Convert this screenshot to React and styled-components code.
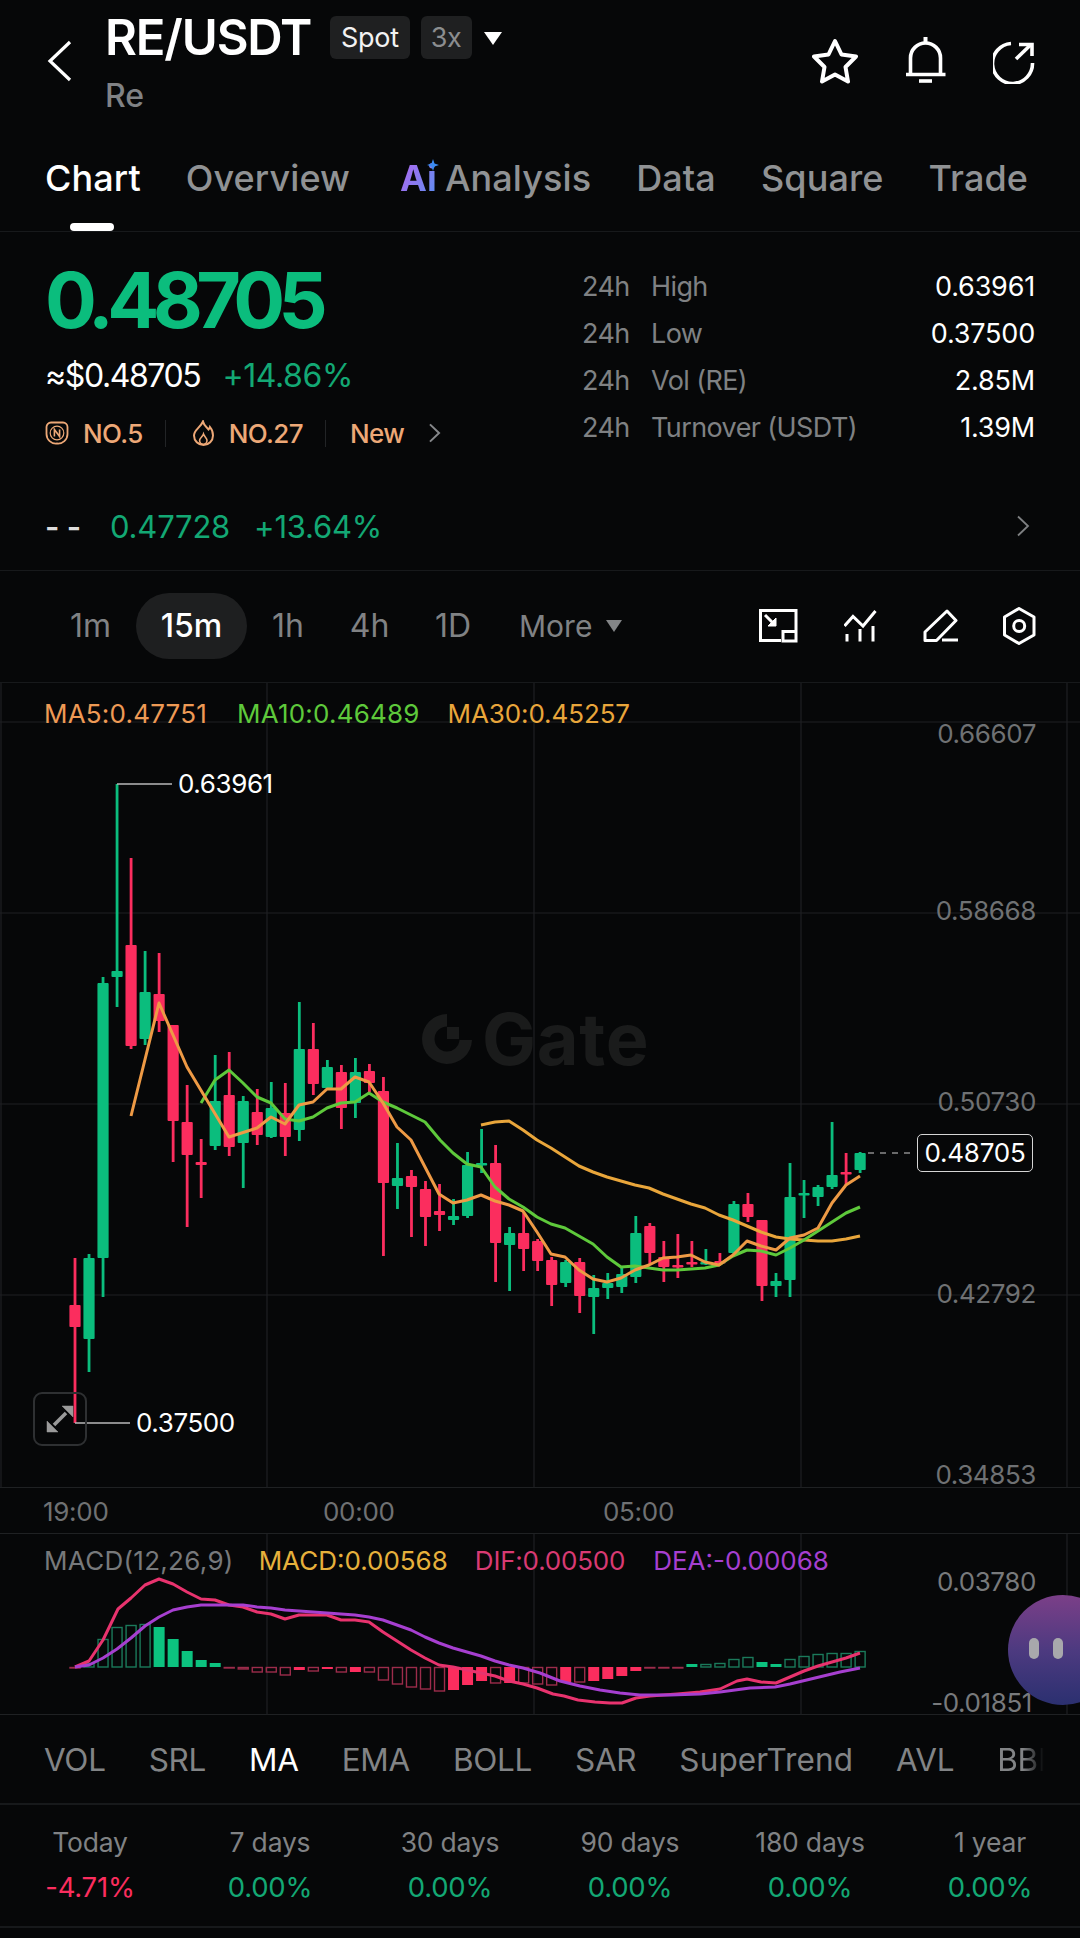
import React from 'react';
import styled, { createGlobalStyle } from 'styled-components';

const GREEN = '#0bbd7d';
const TEXTGREEN = '#13a874';
const RED = '#fb2d5e';
const LINE = '#17191b';
const GRID = '#1f2123';

const Global = createGlobalStyle`
  html, body { margin: 0; padding: 0; background: #060708; }
  body { font-family: Inter, "Liberation Sans", sans-serif; }
  * { box-sizing: border-box; }
`;

const Page = styled.div`
  position: relative;
  width: 1080px;
  height: 1938px;
  overflow: hidden;
  background: #060708;
  color: #fff;
`;

/* ---------- header ---------- */
const Header = styled.header`
  height: 130px;
  display: flex;
  align-items: flex-start;
`;
const BackButton = styled.div`
  width: 105px;
  padding: 40px 0 0 47px;
  svg { display: block; }
`;
const TitleBlock = styled.div`
  display: flex;
  flex-direction: column;
`;
const TitleRow = styled.div`
  display: flex;
  align-items: center;
  height: 76px;
`;
const Title = styled.h1`
  margin: 0;
  font-size: 49px;
  font-weight: 600;
  letter-spacing: -1.15px;
  line-height: 76px;
  width: 225px;
`;
const Badge = styled.span`
  height: 43px;
  margin-top: -1px;
  padding: 0 ${p => p.$pad}px;
  margin-right: 11px;
  border-radius: 6px;
  background: #1f2021;
  color: ${p => p.$muted ? '#8b8d8f' : '#f2f2f2'};
  font-size: 27px;
  font-weight: 400;
  line-height: 43px;
  letter-spacing: -0.3px;
`;
const Caret = styled.span`
  width: 0;
  height: 0;
  margin: 0 0 0 1px;
  border-left: 9px solid transparent;
  border-right: 9px solid transparent;
  border-top: 13px solid #fff;
`;
const Subtitle = styled.div`
  font-size: 32px;
  line-height: 36px;
  margin-top: 2px;
  color: #808285;
  font-weight: 500;
`;
const HeaderIcons = styled.div`
  margin-left: auto;
  display: flex;
  gap: 47.5px;
  padding: 37px 45px 0 0;
  svg { display: block; }
`;

/* ---------- tabs ---------- */
const Tabs = styled.nav`
  height: 102px;
  padding: 24px 0 0 45px;
  display: flex;
  gap: 45px;
  border-bottom: 1px solid ${LINE};
`;
const Tab = styled.div`
  position: relative;
  height: 77px;
  font-size: 36px;
  line-height: 48px;
  font-weight: 500;
  letter-spacing: 0.1px;
  color: ${p => p.$active ? '#fff' : '#909294'};
  margin-left: ${p => p.$offset || 0}px;
  display: flex;
  gap: 8px;
  &::after {
    content: '';
    display: ${p => p.$active ? 'block' : 'none'};
    position: absolute;
    left: 25px;
    bottom: 0;
    width: 44px;
    height: 8px;
    border-radius: 4px;
    background: #fff;
  }
`;
const AiMark = styled.span`
  position: relative;
  font-weight: 700;
  background: linear-gradient(120deg, #a66cf0 15%, #6f86f0 60%, #3a8df0 90%);
  -webkit-background-clip: text;
  background-clip: text;
  color: transparent;
  svg { position: absolute; right: -2px; top: 5px; }
`;

/* ---------- info ---------- */
const Info = styled.section`
  height: 339px;
  border-bottom: 1px solid ${LINE};
  padding: 0 45px;
`;
const InfoTop = styled.div`
  height: 219px;
  display: flex;
  justify-content: space-between;
`;
const PriceColumn = styled.div`
  padding-top: 30px;
`;
const Price = styled.div`
  font-size: 77px;
  line-height: 76px;
  font-weight: 700;
  letter-spacing: -6.6px;
  color: ${GREEN};
`;
const SubPrice = styled.div`
  margin-top: 17px;
  height: 40px;
  display: flex;
  gap: 22px;
  align-items: center;
  font-size: 32px;
  font-weight: 400;
  letter-spacing: -1.4px;
`;
const Change = styled.span`
  color: ${p => p.$red ? RED : TEXTGREEN};
  letter-spacing: -0.4px;
`;
const RankRow = styled.div`
  margin-top: 20px;
  height: 36px;
  display: flex;
  align-items: center;
  font-size: 26px;
  font-weight: 500;
  color: #eda877;
  letter-spacing: -0.6px;
  svg { display: block; }
`;
const Rank = styled.span`
  display: flex;
  align-items: center;
  gap: ${p => p.$gap}px;
`;
const RankDivider = styled.span`
  width: 1px;
  height: 27px;
  background: #222426;
  margin: 0 ${p => p.$r}px 0 ${p => p.$l}px;
`;
const StatsColumn = styled.div`
  width: 453px;
  padding-top: 31px;
`;
const StatRow = styled.div`
  height: 47px;
  display: flex;
  align-items: center;
  font-size: 27px;
  font-weight: 400;
  letter-spacing: -0.6px;
  color: #7f8183;
`;
const StatPeriod = styled.span`
  width: 69px;
`;
const StatValue = styled.span`
  margin-left: auto;
  color: #fff;
  font-size: 27px;
  letter-spacing: -0.2px;
`;
const Ticker = styled.div`
  margin-top: 55px;
  height: 40px;
  display: flex;
  align-items: center;
  font-size: 31px;
  letter-spacing: -0.2px;
  svg { margin-left: auto; margin-right: 5px; display: block; }
`;
const Dashes = styled.span`
  width: 65px;
  color: #ddd;
  font-weight: 600;
`;
const TickerValue = styled.span`
  color: ${TEXTGREEN};
  margin-right: 24px;
`;

/* ---------- timeframe toolbar ---------- */
const Toolbar = styled.div`
  height: 112px;
  padding: 0 0 2px 45px;
  display: flex;
  align-items: center;
  border-bottom: 1px solid ${LINE};
`;
const Interval = styled.span`
  width: ${p => p.$w}px;
  height: 66px;
  border-radius: 33px;
  text-align: center;
  line-height: 66px;
  font-size: 32px;
  font-weight: ${p => p.$active ? 500 : 400};
  color: ${p => p.$active ? '#fff' : '#808284'};
  background: ${p => p.$active ? '#1e1f20' : 'transparent'};
`;
const MoreButton = styled.span`
  margin-left: 23px;
  font-size: 30px;
  color: #808284;
  display: flex;
  align-items: center;
  gap: 14px;
  &::after {
    content: '';
    width: 0;
    height: 0;
    border-left: 8.5px solid transparent;
    border-right: 8.5px solid transparent;
    border-top: 12px solid #838587;
  }
`;
const ToolIcons = styled.div`
  margin-left: auto;
  padding-right: 44px;
  display: flex;
  align-items: center;
  gap: 45px;
  svg { display: block; }
`;

/* ---------- chart ---------- */
const ChartPanel = styled.div`
  position: relative;
  height: 805px;
  border-bottom: 1px solid ${GRID};
`;
const ChartSvg = styled.svg`
  position: absolute;
  left: 0;
  top: 0;
`;
const Legend = styled.div`
  position: relative;
  display: flex;
  padding: 15px 0 0 44px;
  height: 62px;
  font-size: 26px;
  line-height: 32px;
  letter-spacing: 0.2px;
`;
const LegendItem = styled.span`
  color: ${p => p.$color};
  margin-right: ${p => p.$gap}px;
  letter-spacing: ${p => p.$ls ?? 0.1}px;
`;
const Watermark = styled.div`
  position: absolute;
  left: 421px;
  top: 326px;
  display: flex;
  align-items: center;
  gap: 9px;
  color: #1a1b1b;
  font-size: 72px;
  line-height: 60px;
  font-weight: 700;
  letter-spacing: 0.75px;
  svg { display: block; }
`;
const AxisLabel = styled.span`
  position: absolute;
  right: 44px;
  top: ${p => p.$y - 682 - 16}px;
  font-size: 26px;
  line-height: 32px;
  letter-spacing: -0.4px;
  color: #6f7173;
`;
const ExtremeLabel = styled.span`
  position: absolute;
  left: ${p => p.$x}px;
  top: ${p => p.$y - 683 - 16}px;
  font-size: 26px;
  line-height: 32px;
  color: #fff;
  letter-spacing: -0.4px;
`;
const PriceTag = styled.span`
  position: absolute;
  left: 917px;
  top: ${1134 - 683}px;
  width: 116px;
  height: 38px;
  border: 1px solid #d5d5d5;
  border-radius: 5px;
  background: #060708;
  text-align: center;
  font-size: 26px;
  line-height: 36px;
  letter-spacing: -0.2px;
`;
const ExpandButton = styled.div`
  position: absolute;
  left: 33px;
  top: ${1392 - 683}px;
  width: 54px;
  height: 54px;
  border: 2px solid #2e3032;
  border-radius: 9px;
  display: flex;
  align-items: center;
  justify-content: center;
  svg { display: block; }
`;

const TimeAxis = styled.div`
  height: 46px;
  display: flex;
  gap: 216px;
  padding-left: 43px;
  border-bottom: 1px solid ${GRID};
`;
const TimeLabel = styled.span`
  width: 64px;
  font-size: 26px;
  line-height: 48px;
  color: #6f7173;
  text-align: center;
  letter-spacing: -0.3px;
  white-space: nowrap;
`;

/* ---------- macd ---------- */
const MacdPanel = styled.div`
  position: relative;
  height: 181px;
  border-bottom: 1px solid ${GRID};
`;
const MacdLegend = styled.div`
  position: relative;
  display: flex;
  padding: 11px 0 0 44px;
  font-size: 26px;
  line-height: 32px;
`;
const MacdAxis = styled.span`
  position: absolute;
  right: ${p => p.$r}px;
  top: ${p => p.$y - 1534 - 16}px;
  font-size: 26px;
  line-height: 32px;
  letter-spacing: -0.4px;
  color: #787a7c;
`;

/* ---------- indicators ---------- */
const Indicators = styled.div`
  height: 90px;
  padding-left: 44px;
  display: flex;
  align-items: center;
  gap: 43px;
  border-bottom: 2px solid ${LINE};
  white-space: nowrap;
  overflow: hidden;
`;
const Indicator = styled.span`
  font-size: 31.5px;
  color: ${p => p.$active ? '#fff' : '#828486'};
  font-weight: 400;
  letter-spacing: ${p => p.$ls ?? -0.3}px;
`;
const FadedIndicator = styled(Indicator)`
  width: 47px;
  overflow: hidden;
  -webkit-mask-image: linear-gradient(90deg, #000 55%, transparent 100%);
  mask-image: linear-gradient(90deg, #000 55%, transparent 100%);
`;

/* ---------- returns ---------- */
const Returns = styled.div`
  height: 123px;
  display: grid;
  grid-template-columns: repeat(6, 1fr);
  border-bottom: 2px solid ${LINE};
`;
const ReturnCell = styled.div`
  text-align: center;
  padding-top: 19px;
`;
const ReturnLabel = styled.div`
  font-size: 26.5px;
  line-height: 36px;
  color: #808284;
  letter-spacing: -0.2px;
`;
const ReturnValue = styled.div`
  margin-top: 9px;
  font-size: 27.5px;
  line-height: 36px;
  letter-spacing: -0.2px;
  color: ${p => p.$red ? RED : TEXTGREEN};
`;

/* ---------- floating assistant ---------- */
const Assistant = styled.div`
  position: absolute;
  left: 1008px;
  top: 1595px;
  width: 110px;
  height: 110px;
  border-radius: 50%;
  background: linear-gradient(180deg, #7b3f88 0%, #4d3a80 50%, #2b3070 100%);
  display: flex;
  gap: 14px;
  padding: 43px 0 0 21px;
`;
const Eye = styled.span`
  width: 10px;
  height: 21px;
  border-radius: 5px;
  background: #a8a8ac;
`;

/* ---------- data ---------- */
// [high, bodyTop, bodyBottom, low, colour]
const candles = [
  [1258,1305,1327,1423,'r'],[1254,1258,1339,1372,'g'],[977,983,1258,1297,'g'],[784,971,977,1007,'g'],
  [858,945,1046,1049,'r'],[951,992,1039,1045,'g'],[953,994,1021,1032,'r'],[1025,1025,1121,1162,'r'],
  [1085,1122,1155,1227,'r'],[1139,1162,1165,1198,'r'],[1055,1101,1146,1150,'g'],[1052,1095,1147,1156,'r'],
  [1096,1101,1143,1188,'g'],[1089,1112,1135,1145,'r'],[1082,1108,1137,1138,'g'],[1083,1113,1137,1156,'r'],
  [1002,1049,1130,1141,'g'],[1023,1049,1084,1095,'r'],[1060,1067,1088,1090,'g'],[1065,1072,1108,1129,'r'],
  [1058,1072,1103,1118,'g'],[1064,1071,1083,1092,'r'],[1077,1091,1183,1256,'r'],[1143,1178,1186,1209,'g'],
  [1170,1176,1187,1237,'r'],[1181,1189,1217,1246,'r'],[1184,1211,1215,1231,'r'],[1199,1216,1220,1225,'g'],
  [1152,1165,1216,1218,'g'],[1129,1163,1165,1173,'g'],[1145,1163,1243,1282,'r'],[1227,1233,1245,1291,'g'],
  [1212,1233,1249,1271,'r'],[1239,1241,1261,1271,'r'],[1257,1260,1285,1306,'r'],[1260,1262,1283,1287,'g'],
  [1258,1262,1296,1313,'r'],[1275,1288,1297,1334,'g'],[1273,1283,1288,1299,'g'],[1268,1274,1287,1293,'g'],
  [1216,1233,1277,1283,'g'],[1223,1226,1253,1265,'r'],[1241,1257,1267,1282,'r'],[1234,1265,1267,1278,'r'],
  [1241,1262,1264,1267,'r'],[1249,1262,1264,1265,'g'],[1253,1261,1263,1265,'r'],[1201,1204,1253,1255,'g'],
  [1193,1204,1217,1222,'r'],[1220,1220,1286,1301,'r'],[1273,1281,1286,1297,'g'],[1163,1197,1280,1297,'g'],
  [1180,1193,1195,1218,'g'],[1185,1187,1197,1206,'g'],[1122,1175,1187,1189,'g'],[1153,1172,1174,1185,'r'],
  [1152,1153,1170,1173,'g'],
];
const candleX = n => 75 + n * 14.02;

const ma5 = '131,1116 159,1003 187,1067 229,1137 257,1128 271,1117 285,1124 299,1105 313,1102 327,1089 341,1089 355,1077 369,1082 383,1103 397,1127 411,1140 425,1167 439,1194 453,1203 467,1200 481,1195 495,1201 509,1205 523,1211 537,1232 551,1254 565,1257 579,1270 593,1279 607,1282 621,1278 635,1270 649,1265 663,1258 677,1257 691,1255 705,1262 719,1265 733,1255 747,1241 761,1246 776,1250 790,1238 804,1235 818,1228 832,1203 846,1185 860,1176';
const ma10 = '201,1103 215,1080 229,1070 243,1083 257,1097 271,1103 285,1119 299,1121 313,1117 327,1108 341,1103 355,1102 369,1093 383,1102 397,1108 411,1115 425,1122 440,1140 453,1153 467,1164 481,1167 495,1187 509,1199 523,1207 537,1217 551,1224 565,1228 579,1236 593,1244 607,1257 621,1267 635,1266 649,1268 663,1270 677,1270 691,1269 705,1268 719,1265 733,1256 747,1250 761,1251 776,1255 790,1248 804,1240 818,1231 832,1222 846,1213 860,1207';
const ma30 = '481,1125 495,1122 509,1121 523,1130 537,1140 551,1148 565,1157 579,1166 593,1172 607,1177 621,1181 635,1185 649,1188 663,1194 677,1199 691,1204 705,1208 719,1215 733,1220 747,1226 761,1232 776,1237 790,1239 804,1240 818,1241 832,1241 846,1239 860,1236';

// [value end y, solid]
const bars = [
  [1668,0],[1663,0],[1639,0],[1627,0],[1625,0],[1624,0],[1627,1],[1639,1],[1651,1],[1660,1],[1663,1],
  [1668,0],[1669,0],[1672,0],[1672,0],[1675,0],[1670,1],[1671,0],[1669,1],[1672,0],[1672,1],[1672,0],
  [1680,0],[1684,0],[1687,0],[1689,0],[1691,0],[1690,1],[1685,1],[1681,1],[1683,0],[1683,1],[1683,0],
  [1684,0],[1685,0],[1682,1],[1682,0],[1681,1],[1679,1],[1676,1],[1671,1],[1668,0],[1667.5,0],[1667,0],
  [1664,1],[1664,0],[1663,0],[1659,0],[1657,0],[1662,1],[1664,1],[1659,0],[1656,0],[1654,0],[1653,0],
  [1653,0],[1651,0],
];
const dif = '75,1667 89,1661 103,1640 118,1609 131,1598 145,1585 159,1579 173,1584 187,1592 201,1599 215,1600 229,1605 243,1607 257,1612 271,1614 285,1619 299,1615 313,1615 327,1615 341,1620 355,1620 369,1622 383,1632 397,1641 411,1650 425,1658 439,1665 453,1667 467,1670 481,1673 495,1676 509,1681 523,1684 537,1688 553,1694 564,1696 578,1700 595,1702 610,1703 622,1703 636,1698 650,1696 677,1694 700,1692 720,1689 737,1681 747,1679 761,1682 776,1683 790,1677 804,1671 818,1666 832,1662 846,1658 860,1653';
const dea = '75,1667 89,1665 103,1658 117,1649 131,1638 145,1626 159,1617 173,1610 187,1607 201,1605 215,1605 229,1605 243,1605 257,1607 271,1608 285,1610 299,1611 313,1612 327,1613 341,1614 355,1615 369,1617 383,1620 397,1625 411,1630 425,1637 439,1643 453,1648 467,1652 481,1656 495,1661 509,1665 523,1668 540,1673 560,1681 580,1686 600,1690 620,1693 640,1695 670,1695 700,1694 720,1692 750,1688 775,1687 790,1684 815,1678 840,1672 860,1668';

const gridX = [1, 267, 534, 801, 1067];

const Chevron = ({ w = 14, h = 22, color = '#8a8c8e', sw = 2 }) => (
  <svg width={w} height={h} viewBox="0 0 14 22" fill="none">
    <path d="M2 1.5 L12 11 L2 20.5" stroke={color} strokeWidth={sw} />
  </svg>
);

const Candles = () => candles.map(([hi, top, bot, lo, c], n) => {
  const x = candleX(n);
  const color = c === 'g' ? GREEN : RED;
  return (
    <g key={n} fill={color}>
      <rect x={x - 1.4} y={hi} width={2.8} height={lo - hi} />
      <rect x={x - 5.6} y={top} width={11.2} height={Math.max(bot - top, 2.5)} rx={1} />
    </g>
  );
});

const Histogram = () => bars.map(([y, solid], n) => {
  const x = candleX(n);
  const up = y < 1667;
  const top = up ? y : 1667;
  const h = Math.abs(y - 1667);
  const fill = up ? '#0cc27f' : RED;
  const stroke = up ? '#1b7a5b' : '#9c2c4b';
  return solid
    ? <rect key={n} x={x - 5.5} y={top} width={11} height={h} fill={fill} />
    : <rect key={n} x={x - 5} y={top + 0.5} width={10} height={Math.max(h - 0.5, 0.5)} fill="none" stroke={stroke} strokeWidth={1.4} />;
});

export default function App() {
  return (
    <Page>
      <Global />
      <Header>
        <BackButton>
          <svg width="26" height="42" viewBox="0 0 26 42" fill="none">
            <path d="M23 2 L3 21 L23 40" stroke="#fff" strokeWidth="3.2" />
          </svg>
        </BackButton>
        <TitleBlock>
          <TitleRow>
            <Title>RE/USDT</Title>
            <Badge $pad={11}>Spot</Badge>
            <Badge $pad={10} $muted>3x</Badge>
            <Caret />
          </TitleRow>
          <Subtitle>Re</Subtitle>
        </TitleBlock>
        <HeaderIcons>
          <svg width="46" height="47" viewBox="812 37 46 47" fill="none" stroke="#fff" strokeWidth="4" strokeLinejoin="round">
            <path d="M835 41 L841.5 54.5 L856 56.5 L845.5 67 L848 81.5 L835 74.5 L822 81.5 L824.5 67 L814 56.5 L828.5 54.5 Z" />
          </svg>
          <svg width="40" height="47" viewBox="905 37 40 47" fill="none" stroke="#fff" strokeWidth="3.6">
            <path d="M909.5 74 V58 a15 15 0 0 1 30 0 V74" />
            <path d="M905 74.5 H944.5" />
            <path d="M924.5 37 V43" strokeWidth="4" />
            <path d="M918 81 H931" />
          </svg>
          <svg width="42" height="47" viewBox="993 37 42 47" fill="none" stroke="#fff" strokeWidth="3.6">
            <path d="M1011 43.5 A20 20 0 1 0 1032.5 63" />
            <path d="M1016 59 L1031 44.5" />
            <path d="M1019 44.5 H1032 V56" />
          </svg>
        </HeaderIcons>
      </Header>

      <Tabs>
        <Tab $active>Chart</Tab>
        <Tab>Overview</Tab>
        <Tab $offset={5}>
          <AiMark>
            Ai
            <svg width="12" height="12" viewBox="0 0 12 12"><path d="M6 0 L7.5 4.5 L12 6 L7.5 7.5 L6 12 L4.5 7.5 L0 6 L4.5 4.5 Z" fill="#3b8bf2" /></svg>
          </AiMark>
          Analysis
        </Tab>
        <Tab>Data</Tab>
        <Tab>Square</Tab>
        <Tab>Trade</Tab>
      </Tabs>

      <Info>
        <InfoTop>
          <PriceColumn>
            <Price>0.48705</Price>
            <SubPrice>
              <span>≈$0.48705</span>
              <Change>+14.86%</Change>
            </SubPrice>
            <RankRow>
              <Rank $gap={14}>
                <svg width="24" height="24" viewBox="0 0 24 24" fill="none" stroke="#eda877" strokeWidth="1.8">
                  <path d="M6 1.5 H18 A4.5 4.5 0 0 1 22.5 6 V13 A9.5 9.5 0 0 1 12 22.5 A9.5 9.5 0 0 1 1.5 13 V6 A4.5 4.5 0 0 1 6 1.5 Z" />
                  <circle cx="12" cy="12" r="6.8" strokeWidth="1.2" />
                  <path d="M9.4 15.5 V8.5 L14.6 15.5 V8.5" strokeWidth="1.6" />
                </svg>
                NO.5
              </Rank>
              <RankDivider $l={22} $r={27} />
              <Rank $gap={15}>
                <svg width="21" height="26" viewBox="0 0 21 26" fill="none" stroke="#eda877" strokeWidth="2">
                  <path d="M10 1.5 C11 6 14 7 15.5 9.5 C16.5 8.5 16.8 7.8 17 7 C19 9.5 20 12.5 20 15.5 A9.5 9.5 0 0 1 1 15.5 C1 10 7.5 7.5 10 1.5 Z" />
                  <path d="M10.5 14 C11.5 17 14 18 14 20.5 A3.7 3.7 0 0 1 6.6 20.5 C6.6 18 9.5 17 10.5 14 Z" strokeWidth="1.6" />
                </svg>
                NO.27
              </Rank>
              <RankDivider $l={22} $r={24} />
              <Rank $gap={24}>
                New
                <Chevron w={13} h={20} color="#85878a" sw={2.2} />
              </Rank>
            </RankRow>
          </PriceColumn>
          <StatsColumn>
            {[['High', '0.63961'], ['Low', '0.37500'], ['Vol (RE)', '2.85M'], ['Turnover (USDT)', '1.39M']].map(([k, v]) => (
              <StatRow key={k}>
                <StatPeriod>24h</StatPeriod>
                <span>{k}</span>
                <StatValue>{v}</StatValue>
              </StatRow>
            ))}
          </StatsColumn>
        </InfoTop>
        <Ticker>
          <Dashes>- -</Dashes>
          <TickerValue>0.47728</TickerValue>
          <TickerValue>+13.64%</TickerValue>
          <Chevron w={14} h={22} color="#7e8082" sw={1.8} />
        </Ticker>
      </Info>

      <Toolbar>
        <Interval $w={91}>1m</Interval>
        <Interval $w={111} $active>15m</Interval>
        <Interval $w={82}>1h</Interval>
        <Interval $w={81}>4h</Interval>
        <Interval $w={86}>1D</Interval>
        <MoreButton>More</MoreButton>
        <ToolIcons>
          <svg width="40" height="36" viewBox="760 609 40 36" fill="none" stroke="#fff" strokeWidth="3">
            <path d="M782 641.5 H761.5 V611.5 H797 V631" />
            <rect x="784" y="632.5" width="13" height="9.5" />
            <path d="M766 616 L776 626" />
            <path d="M769 627 H777 V619 Z" fill="#fff" strokeWidth="1" />
          </svg>
          <svg width="33" height="34" viewBox="843 610 33 34" fill="none" stroke="#fff" strokeWidth="3">
            <path d="M843.5 627 L852 617.5 L862 627 L874.5 612" />
            <path d="M846 635 V642.5 M859 630 V642.5 M872 627 V642.5" />
          </svg>
          <svg width="36" height="34" viewBox="921 609 36 34" fill="none" stroke="#fff" strokeWidth="3" strokeLinejoin="round">
            <path d="M924 632 L946 611 L955 620.5 L935.5 640.5 H924 Z" />
            <path d="M941 640 H957" />
          </svg>
          <svg width="33" height="38" viewBox="1003 608 33 38" fill="none" stroke="#fff" strokeWidth="3" strokeLinejoin="round">
            <path d="M1019 609.5 L1034 618 V636 L1019 644.5 L1004.5 636 V618 Z" />
            <circle cx="1019.2" cy="627" r="5.5" />
          </svg>
        </ToolIcons>
      </Toolbar>

      <ChartPanel>
        <Watermark>
          <svg width="52" height="52" viewBox="0 0 52 52" fill="none">
            <path d="M26 1 A25 25 0 1 0 51 27 H38.5 A12.5 12.5 0 1 1 26 13.5 Z" fill="#1a1b1b" />
            <rect x="26" y="14" width="12" height="12" fill="#1a1b1b" />
          </svg>
          <span>Gate</span>
        </Watermark>
        <ChartSvg width="1080" height="805" viewBox="0 683 1080 805" fill="none">
          <g stroke={GRID} strokeWidth="1.2">
            {[722, 913, 1104, 1295].map(y => <path key={y} d={`M0 ${y} H1080`} />)}
            {gridX.map(x => <path key={x} d={`M${x} 683 V1488`} />)}
          </g>
          <Candles />
          <polyline points={ma30} stroke="#e9a63b" strokeWidth="3" strokeLinejoin="round" />
          <polyline points={ma10} stroke="#5ec93b" strokeWidth="3" strokeLinejoin="round" />
          <polyline points={ma5} stroke="#ee9a45" strokeWidth="3" strokeLinejoin="round" />
          <path d="M117 784 H172" stroke="#b8b8b8" strokeWidth="1.5" />
          <path d="M75 1423 H130" stroke="#b8b8b8" strokeWidth="1.5" />
          <path d="M868 1153 H915" stroke="#8a8a8a" strokeWidth="1.5" strokeDasharray="6 6" />
        </ChartSvg>
        <Legend>
          <LegendItem $color="#ee9a55" $ls={0.2} $gap={30}>MA5:0.47751</LegendItem>
          <LegendItem $color="#5ec93b" $ls={0.2} $gap={28}>MA10:0.46489</LegendItem>
          <LegendItem $color="#e9a63b" $ls={-0.1} $gap={0}>MA30:0.45257</LegendItem>
        </Legend>
        <AxisLabel $y={733}>0.66607</AxisLabel>
        <AxisLabel $y={910}>0.58668</AxisLabel>
        <AxisLabel $y={1101}>0.50730</AxisLabel>
        <AxisLabel $y={1293}>0.42792</AxisLabel>
        <AxisLabel $y={1474}>0.34853</AxisLabel>
        <ExtremeLabel $x={178} $y={784}>0.63961</ExtremeLabel>
        <ExtremeLabel $x={136} $y={1423}>0.37500</ExtremeLabel>
        <PriceTag>0.48705</PriceTag>
        <ExpandButton>
          <svg width="28" height="28" viewBox="0 0 28 28" fill="#9a9a9a" stroke="#9a9a9a">
            <path d="M16 1 H27 V12 Z" strokeWidth="0.5" />
            <path d="M12 27 H1 V16 Z" strokeWidth="0.5" />
            <path d="M8 20 L20 8" strokeWidth="3.5" />
          </svg>
        </ExpandButton>
      </ChartPanel>

      <TimeAxis>
        <TimeLabel>19:00</TimeLabel>
        <TimeLabel>00:00</TimeLabel>
        <TimeLabel>05:00</TimeLabel>
      </TimeAxis>

      <MacdPanel>
        <ChartSvg width="1080" height="181" viewBox="0 1534 1080 181" fill="none">
          <g stroke={GRID} strokeWidth="1.2">
            {gridX.slice(1).map(x => <path key={x} d={`M${x} 1534 V1715`} />)}
          </g>
          <Histogram />
          <polyline points={dif} stroke="#e8336e" strokeWidth="3" strokeLinejoin="round" />
          <polyline points={dea} stroke="#a63fd0" strokeWidth="3" strokeLinejoin="round" />
        </ChartSvg>
        <MacdLegend>
          <LegendItem $color="#77797b" $ls={0.3} $gap={25}>MACD(12,26,9)</LegendItem>
          <LegendItem $color="#e6b13c" $ls={0} $gap={27}>MACD:0.00568</LegendItem>
          <LegendItem $color="#d83a73" $ls={-0.2} $gap={28}>DIF:0.00500</LegendItem>
          <LegendItem $color="#a63fd0" $ls={0} $gap={0}>DEA:-0.00068</LegendItem>
        </MacdLegend>
        <MacdAxis $r={44} $y={1582}>0.03780</MacdAxis>
        <MacdAxis $r={48} $y={1703}>-0.01851</MacdAxis>
      </MacdPanel>

      <Indicators>
        <Indicator>VOL</Indicator>
        <Indicator>SRL</Indicator>
        <Indicator $active>MA</Indicator>
        <Indicator>EMA</Indicator>
        <Indicator>BOLL</Indicator>
        <Indicator>SAR</Indicator>
        <Indicator $ls={0.1}>SuperTrend</Indicator>
        <Indicator>AVL</Indicator>
        <FadedIndicator>BBI</FadedIndicator>
      </Indicators>

      <Returns>
        {[['Today', '-4.71%', true], ['7 days', '0.00%'], ['30 days', '0.00%'], ['90 days', '0.00%'], ['180 days', '0.00%'], ['1 year', '0.00%']].map(([k, v, red]) => (
          <ReturnCell key={k}>
            <ReturnLabel>{k}</ReturnLabel>
            <ReturnValue $red={red}>{v}</ReturnValue>
          </ReturnCell>
        ))}
      </Returns>

      <Assistant>
        <Eye />
        <Eye />
      </Assistant>
    </Page>
  );
}
